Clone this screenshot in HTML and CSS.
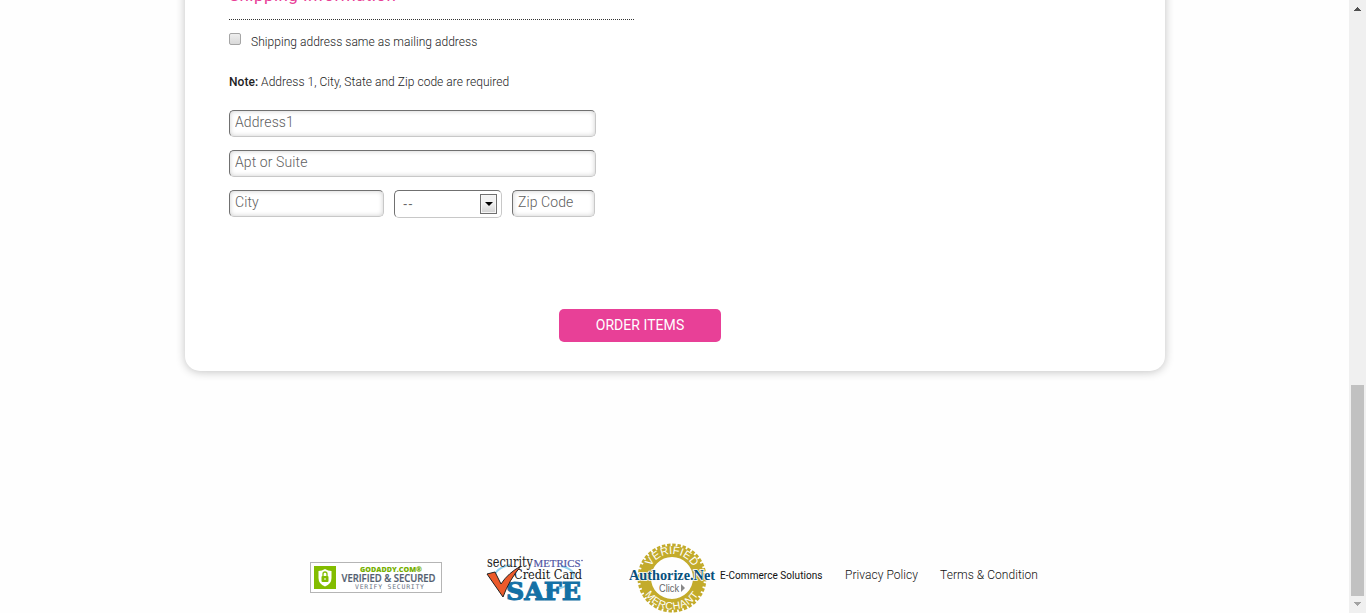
FILE: index.html
```html
<!DOCTYPE html>
<html lang="en">
<head>
<meta charset="utf-8">
<title>Order Items</title>
<link rel="stylesheet" href="styles.css">
</head>
<body>
<main class="page">
  <form class="card">
    <section class="shipping">
      <h2 class="heading"><span>Shipping Information</span></h2>
      <label class="same"><i class="check"></i><span class="same-text">Shipping address same as mailing address</span></label>
      <p class="note"><b>Note:</b> Address 1, City, State and Zip code are required</p>
      <div class="fields">
        <input class="field wide" type="text" placeholder="Address1">
        <input class="field wide" type="text" placeholder="Apt or Suite">
        <div class="row">
          <input class="field city" type="text" placeholder="City">
          <div class="select"><span class="dashes">--</span><i class="drop"><svg width="8" height="4" viewBox="0 0 8 4"><path d="M0 0h8L4 4z"/></svg></i></div>
          <input class="field zip" type="text" placeholder="Zip Code">
        </div>
      </div>
    </section>
    <button class="order" type="button">ORDER ITEMS</button>
  </form>
  <footer class="footer">
    <svg class="godaddy" width="132" height="31" viewBox="0 0 132 31">
      <rect x=".5" y=".5" width="131" height="30" fill="#fff" stroke="#b5b5b5"/>
      <rect x="4" y="4" width="22" height="23" fill="#83bd00"/>
      <path d="M15 7q3 2 6.500 2v7q0 6-6.500 8.500Q8.500 22 8.500 16V9Q12 9 15 7z" fill="#fff"/>
      <rect x="11.500" y="14" width="7" height="6" rx="1" fill="#83bd00"/>
      <path d="M13 14v-2a2 2 0 0 1 4 0v2" fill="none" stroke="#83bd00" stroke-width="1.300"/>
      <rect x="14.500" y="16" width="1" height="2" fill="#fff"/>
      <text class="gd-name" x="50" y="10" textLength="62" lengthAdjust="spacingAndGlyphs">GODADDY.COM®</text>
      <text class="gd-main" x="31.500" y="20" textLength="94" lengthAdjust="spacingAndGlyphs">VERIFIED &amp; SECURED</text>
      <text class="gd-sub" x="45" y="27" textLength="69">VERIFY SECURITY</text>
    </svg>
    <svg class="metrics" width="98" height="50" viewBox="0 0 98 50">
      <path d="M8 25Q9 15 24 12M75 13q16 4 12 13M60 37q15 0 23-6" fill="none" stroke="#8ed0ef" stroke-width="2"/>
      <text class="sm-name" x="1" y="14" textLength="46" lengthAdjust="spacingAndGlyphs">security</text>
      <text class="sm-caps" x="47.500" y="14" textLength="47" lengthAdjust="spacingAndGlyphs">METRICS</text>
      <circle cx="96" cy="7.500" r=".8" fill="#5054a4"/>
      <text class="sm-credit" x="28" y="26" textLength="68" lengthAdjust="spacingAndGlyphs">Credit Card</text>
      <text class="sm-safe" x="20" y="47" textLength="75" lengthAdjust="spacingAndGlyphs">SAFE</text>
      <path d="M1 21l8-2 6 12Q22 20 35 13 23 27 17 44z" fill="#eb5a2b" stroke="#222" stroke-width="1"/>
    </svg>
    <svg class="authorize" width="88" height="70" viewBox="0 0 88 70">
      <defs>
        <path id="top-arc" d="M19 35a24 24 0 0 1 48 0"/>
        <path id="bottom-arc" d="M11.500 35a31.500 31.500 0 0 0 63 0"/>
      </defs>
      <circle cx="43" cy="35" r="32.800" fill="none" stroke="#c3ab2b" stroke-width="3.400" stroke-dasharray="3.435 1.717"/>
      <circle cx="43" cy="35" r="26.500" fill="none" stroke="#c3ab2b" stroke-width="11"/>
      <text class="seal"><textPath href="#top-arc" startOffset="50%" text-anchor="middle">VERIFIED</textPath></text>
      <text class="seal seal-low"><textPath href="#bottom-arc" startOffset="50%" text-anchor="middle">MERCHANT</textPath></text>
      <text class="auth-name" x="0" y="37" textLength="86" lengthAdjust="spacingAndGlyphs">Authorize.Net</text>
      <text class="auth-click" x="30" y="49" textLength="20" lengthAdjust="spacingAndGlyphs">Click</text>
      <path d="M52 41l4 4-4 4z" fill="#888"/>
    </svg>
    <span class="ecom">E-Commerce Solutions</span>
    <span class="link privacy">Privacy Policy</span>
    <span class="link terms">Terms &amp; Condition</span>
  </footer>
</main>
<aside class="scrollbar">
  <svg class="up" width="7" height="4" viewBox="0 0 7 4" shape-rendering="crispEdges"><path d="M3 0h1v1h1v1h1v1h1v1H0V3h1V2h1V1h1z" fill="#505050"/></svg>
  <div class="thumb"></div>
  <svg class="down" width="7" height="4" viewBox="0 0 7 4" shape-rendering="crispEdges"><path d="M0 0h7v1H6v1H5v1H4v1H3V3H2V2H1V1H0z" fill="#a3a3a3"/></svg>
</aside>
</body>
</html>
```

FILE: styles.css
```css
* { box-sizing: border-box; }
body {
  margin: 0;
  height: 613px;
  display: flex;
  overflow: hidden;
  background: #fefefe;
  color: #222;
  font-family: Roboto, "Liberation Sans", sans-serif;
  font-size: 12px;
  font-weight: 300;
}
.page { width: 1349px; height: 613px; overflow: hidden; }
.card {
  display: flex;
  flex-direction: column;
  width: 980px;
  height: 391px;
  margin: -20px 0 0 185px;
  padding: 0 44px 29px;
  background: #fff;
  border-radius: 0 0 15px 15px;
  box-shadow: 0 1px 10px rgba(0, 0, 0, .24);
}
.shipping { width: 405px; }
.heading {
  height: 40px;
  margin: 0;
  border-bottom: 1px dotted #333;
  color: #e84097;
  font-size: 17px;
  font-weight: 400;
  line-height: 31px;
  letter-spacing: .45px;
}
.same { display: flex; margin-top: 13px; height: 18px; line-height: 18px; }
.check {
  width: 12px;
  height: 12px;
  margin-right: 10px;
  border: 1px solid #a5a5a5;
  border-radius: 2px;
  background: linear-gradient(#eee, #d9d9d9);
}
.same-text { letter-spacing: .04px; }
.note { margin: 22px 0 0; height: 18px; line-height: 18px; letter-spacing: .04px; white-space: nowrap; }
.note b { font-weight: 500; }
.fields { display: flex; flex-direction: column; gap: 13px; margin-top: 19px; }
.row { display: flex; }
.field, .select {
  height: 27px;
  border: 1px solid;
  border-color: #707070 #c8c8c8 #c8c8c8 #707070;
  border-radius: 5px;
  background: #fff;
  font: 300 14px Roboto, "Liberation Sans", sans-serif;
  color: #666;
}
.field { padding: 0 5px 3px; box-shadow: inset 0 0 5px rgba(0, 0, 0, .2); letter-spacing: .1px; }
.field::placeholder { color: #606060; opacity: 1; }
.wide { width: 367px; }
.city { width: 155px; margin-right: 10px; }
.select {
  display: flex;
  justify-content: space-between;
  align-items: center;
  width: 108px;
  height: 28px;
  margin-right: 10px;
  padding: 0 4px 0 8px;
  font-size: 13px;
}
.dashes { font-family: "Liberation Sans", sans-serif; letter-spacing: 1px; margin-top: -2px; }
.drop {
  display: flex;
  align-items: center;
  justify-content: center;
  width: 17px;
  height: 20px;
  border: 1px solid #707070;
  box-shadow: inset 0 0 0 1px #f6f6f6;
  background: linear-gradient(#f2f2f2 45%, #d2d2d2);
}
.zip { width: 83px; }
.order {
  width: 162px;
  height: 33px;
  margin: auto 0 0 330px;
  padding: 0 0 2px;
  border: 0;
  border-radius: 5px;
  background: #e84097;
  color: #fff;
  font: 14px Roboto, "Liberation Sans", sans-serif;
  letter-spacing: .05px;
}
.footer { display: flex; height: 71px; margin: 171px 0 0 310px; align-items: flex-start; white-space: nowrap; color: #111; }
.footer svg { flex: none; }
.godaddy { margin-top: 20px; }
.metrics { margin: 11px 0 0 44px; }
.authorize { margin: 1px 0 0 45px; }
.ecom { width: 125px; margin: 27px 0 0 3px; font-size: 10px; font-weight: 400; line-height: 14px; letter-spacing: .05px; }
.link { line-height: 18px; margin-top: 24px; letter-spacing: .05px; }
.privacy { width: 95px; }
.gd-name { font: 800 6.500px "Open Sans", sans-serif; fill: #75b000; }
.gd-main { font: 600 10.500px "Open Sans", sans-serif; fill: #535e70; stroke: #535e70; stroke-width: .2; }
.gd-sub { font: 6.500px "DejaVu Sans Mono", monospace; fill: #6c7585; }
.sm-name { font: 15px "DejaVu Serif", serif; fill: #222; }
.sm-caps { font: 11px "Liberation Serif", serif; fill: #5054a4; stroke: #5054a4; stroke-width: .2; }
.sm-credit { font: 12px "DejaVu Serif", serif; fill: #181818; }
.sm-safe { font: 700 24px "DejaVu Serif", serif; fill: #1470a5; stroke: #1470a5; stroke-width: 1; }
.seal { font: 11px "Liberation Sans", sans-serif; fill: #fff; letter-spacing: .1px; }
.seal-low { font-size: 10.500px; letter-spacing: .6px; }
.auth-name { font: 700 14px "Liberation Serif", serif; fill: #07507c; stroke: #fff; stroke-width: 1.500; paint-order: stroke; }
.auth-click { font: 10px "Liberation Sans", sans-serif; fill: #666; }
.scrollbar { display: flex; flex-direction: column; align-items: center; width: 17px; height: 613px; background: #f0f0f0; }
.up { margin-top: 7px; }
.thumb { width: 13px; height: 211px; margin-top: 374px; background: #c1c1c1; }
.down { margin-top: 6px; }
```
